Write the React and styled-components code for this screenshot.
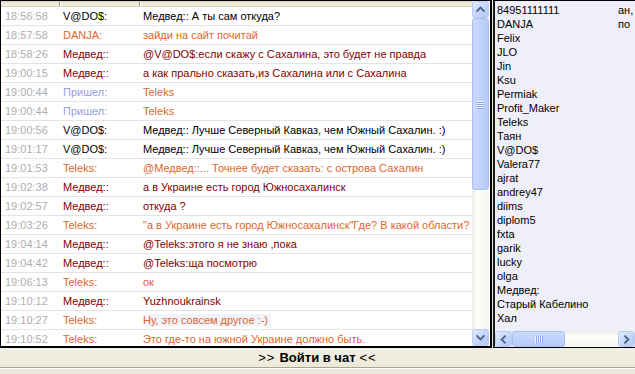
import React from 'react';
import styled, { createGlobalStyle } from 'styled-components';

const Global = createGlobalStyle`
  html, body { margin: 0; padding: 0; background: #ECE9D8; }
  body { font-family: "Liberation Sans", Arial, sans-serif; font-size: 11px; }
  #root { width: 635px; height: 374px; }
`;

const COLORS = {
  black: '#000000',
  orange: '#E0662A',
  maroon: '#840000',
  join: '#9C9CE2',
};

const messages = [
  ['18:56:58', 'V@DO$:', 'Медвед:: А ты сам откуда?', 'black', 'black'],
  ['18:57:58', 'DANJA:', 'зайди на сайт почитай', 'orange', 'orange'],
  ['18:58:26', 'Медвед::', '@V@DO$:если скажу с Сахалина, это будет не правда', 'maroon', 'maroon'],
  ['19:00:15', 'Медвед::', 'а как прально сказать,из Сахалина или с Сахалина', 'maroon', 'maroon'],
  ['19:00:44', 'Пришел:', 'Teleks', 'join', 'orange'],
  ['19:00:44', 'Пришел:', 'Teleks', 'join', 'orange'],
  ['19:00:56', 'V@DO$:', 'Медвед:: Лучше Северный Кавказ, чем Южный Сахалин. :)', 'black', 'black'],
  ['19:01:17', 'V@DO$:', 'Медвед:: Лучше Северный Кавказ, чем Южный Сахалин. :)', 'black', 'black'],
  ['19:01:53', 'Teleks:', '@Медвед::... Точнее будет сказать: с острова Сахалин', 'orange', 'orange'],
  ['19:02:38', 'Медвед::', 'а в Украине есть город Южносахалинск', 'maroon', 'maroon'],
  ['19:02:57', 'Медвед::', 'откуда ?', 'maroon', 'maroon'],
  ['19:03:26', 'Teleks:', '"а в Украине есть город Южносахалинск"Где? В какой области?', 'orange', 'orange'],
  ['19:04:14', 'Медвед::', '@Teleks:этого я не знаю ,пока', 'maroon', 'maroon'],
  ['19:04:42', 'Медвед::', '@Teleks:ща посмотрю', 'maroon', 'maroon'],
  ['19:06:13', 'Teleks:', 'ок', 'orange', 'orange'],
  ['19:10:12', 'Медвед::', 'Yuzhnoukrainsk', 'maroon', 'maroon'],
  ['19:10:27', 'Teleks:', 'Ну, это совсем другое :-)', 'orange', 'orange', true],
  ['19:10:52', 'Teleks:', 'Это где-то на южной Украине должно быть.', 'orange', 'orange'],
];

const users = [
  ['84951111111', 'ан,'],
  ['DANJA', 'по'],
  ['Felix'], ['JLO'], ['Jin'], ['Ksu'], ['Permiak'], ['Profit_Maker'], ['Teleks'],
  ['Таян'], ['V@DO$'], ['Valera77'], ['ajrat'], ['andrey47'], ['diims'], ['diplom5'],
  ['fxta'], ['garik'], ['lucky'], ['olga'], ['Медвед:'], ['Старый Кабелино'], ['Хал'],
];

const Screen = styled.div`
  width: 635px;
  height: 374px;
  display: flex;
  flex-direction: column;
  background: #ECE9D8;
  overflow: hidden;
`;

const TopArea = styled.div`
  display: flex;
  height: 348px;
  gap: 1px;
`;

const ChatPanel = styled.div`
  width: 492px;
  flex: none;
  box-sizing: border-box;
  border: 1px solid #000;
  border-right-width: 2px;
  border-bottom-width: 2px;
  background: #fff;
  display: flex;
  padding-right: 1px;
  overflow: hidden;
`;

const ChatList = styled.div`
  width: 471px;
  flex: none;
  display: flex;
  flex-direction: column;
  overflow: hidden;
`;

const cols = '59px 80px 1fr';

const Header = styled.div`
  display: grid;
  grid-template-columns: ${cols};
  height: 6px;
  flex: none;
  box-sizing: border-box;
  background: linear-gradient(#D8D4C2, #EBE8D6 40%, #F2F0E4);
  border-bottom: 1px solid #D2CFBD;
`;

const HeaderCell = styled.div`
  border-right: ${(p) => (p.$last ? 'none' : '1px solid #9E9A88')};
  box-shadow: ${(p) => (p.$last ? 'none' : '1px 0 0 #fff')};
`;

const Row = styled.div`
  display: grid;
  grid-template-columns: ${cols};
  height: 19px;
  flex: none;
  box-sizing: border-box;
  border-bottom: 1px solid #E4E4E4;
  line-height: 18px;
  white-space: nowrap;
`;

const TimeCell = styled.div`
  padding-left: 4px;
  color: #AEAEAE;
  overflow: hidden;
`;

const NickCell = styled.div`
  padding-left: 3px;
  color: ${(p) => COLORS[p.$tone]};
  overflow: hidden;
`;

const MsgCell = styled.div`
  padding-left: 3px;
  color: ${(p) => COLORS[p.$tone]};
  overflow: hidden;
`;

const MsgText = styled.span`
  background: ${(p) => (p.$hl ? '#F0F3FC' : 'transparent')};
  padding-right: ${(p) => (p.$hl ? '3px' : '0')};
`;

const VScroll = styled.div`
  width: 17px;
  flex: none;
  display: flex;
  flex-direction: column;
  background: linear-gradient(90deg, #EEEDE5, #FDFDFA 30%, #F6F6F1);
`;

const ScrollButton = styled.div`
  width: ${(p) => (p.$w ? `${p.$w}px` : '17px')};
  height: ${(p) => (p.$h ? `${p.$h}px` : '17px')};
  flex: none;
  box-sizing: border-box;
  border: 1px solid #B9CCF6;
  border-radius: 3px;
  background: linear-gradient(135deg, #E4ECFD, #C4D5FB 55%, #B2C7F5);
  display: flex;
  align-items: center;
  justify-content: center;
`;

const VThumb = styled.div`
  height: ${(p) => p.$size}px;
  flex: none;
  box-sizing: border-box;
  border: 1px solid #A9BFF0;
  border-radius: 3px;
  background: linear-gradient(90deg, #CAD9FC, #C1D3FC 50%, #B6CAF7);
  display: flex;
  align-items: center;
  justify-content: center;
`;

const HThumb = styled(VThumb)`
  height: auto;
  width: ${(p) => p.$size}px;
  background: linear-gradient(#CAD9FC, #C1D3FC 50%, #B6CAF7);
`;

const Track = styled.div`
  flex: 1;
`;

const Grip = styled.div`
  display: flex;
  flex-direction: ${(p) => (p.$h ? 'row' : 'column')};
  gap: 1px;
  & > i {
    display: block;
    width: ${(p) => (p.$h ? '1px' : '7px')};
    height: ${(p) => (p.$h ? '7px' : '1px')};
    background: #EEF3FE;
    box-shadow: ${(p) => (p.$h ? '1px 0 0 #8EA8E6' : '0 1px 0 #8EA8E6')};
  }
`;

const UserPanel = styled.div`
  flex: 1;
  box-sizing: border-box;
  border-top: 1px solid #000;
  border-left: 2px solid #1A1A1A;
  border-bottom: 1px solid #000;
  background: #EFEFFA;
  display: flex;
  flex-direction: column;
  overflow: hidden;
`;

const UserList = styled.div`
  flex: 1;
  padding-top: 2px;
  overflow: hidden;
`;

const UserRow = styled.div`
  display: grid;
  grid-template-columns: 123px 1fr;
  height: 14px;
  line-height: 14px;
  white-space: nowrap;
  color: #000;
`;

const UserName = styled.div`
  padding-left: 2px;
  overflow: hidden;
`;

const UserExtra = styled.div`
  overflow: hidden;
`;

const HScroll = styled.div`
  height: 16px;
  flex: none;
  display: flex;
  background: linear-gradient(#EEEDE5, #FDFDFA 30%, #F6F6F1);
`;

const EnterBar = styled.div`
  height: 19px;
  flex: none;
  display: flex;
  align-items: center;
  justify-content: center;
  gap: 4px;
  font-size: 13px;
  color: #000;
  background: linear-gradient(#F1EFE4, #ECE9D8);
  border-bottom: 1px solid #A9A592;
  box-shadow: 0 1px 0 #fff;
  cursor: pointer;
`;

const Arrows = styled.span`
  font-weight: normal;
  letter-spacing: 1px;
`;

const EnterLabel = styled.span`
  font-weight: bold;
`;

const Footer = styled.div`
  flex: 1;
  margin-top: 1px;
  background: #ECE9D8;
`;

const Chevron = ({ dir }) => {
  const paths = {
    up: 'M4.5 9.5 L8 6 L11.5 9.5',
    down: 'M4.5 6.5 L8 10 L11.5 6.5',
    left: 'M9.5 4.5 L6 8 L9.5 11.5',
    right: 'M6.5 4.5 L10 8 L6.5 11.5',
  };
  return (
    <svg width="15" height="15" viewBox="0 0 16 16">
      <path d={paths[dir]} fill="none" stroke="#4D6185" strokeWidth="2" strokeLinecap="square" />
    </svg>
  );
};

export default function App() {
  return (
    <>
      <Global />
      <Screen>
        <TopArea>
          <ChatPanel>
            <ChatList>
              <Header>
                <HeaderCell />
                <HeaderCell />
                <HeaderCell $last />
              </Header>
              {messages.map(([time, nick, msg, nickTone, msgTone, hl], i) => (
                <Row key={i}>
                  <TimeCell>{time}</TimeCell>
                  <NickCell $tone={nickTone}>{nick}</NickCell>
                  <MsgCell $tone={msgTone}>
                    <MsgText $hl={hl}>{msg}</MsgText>
                  </MsgCell>
                </Row>
              ))}
            </ChatList>
            <VScroll>
              <ScrollButton>
                <Chevron dir="up" />
              </ScrollButton>
              <VThumb $size={172}>
                <Grip>
                  <i /><i /><i /><i />
                </Grip>
              </VThumb>
              <Track />
              <ScrollButton>
                <Chevron dir="down" />
              </ScrollButton>
            </VScroll>
          </ChatPanel>
          <UserPanel>
            <UserList>
              {users.map(([name, extra], i) => (
                <UserRow key={i}>
                  <UserName>{name}</UserName>
                  <UserExtra>{extra || ''}</UserExtra>
                </UserRow>
              ))}
            </UserList>
            <HScroll>
              <ScrollButton $h={16}>
                <Chevron dir="left" />
              </ScrollButton>
              <HThumb $size={53}>
                <Grip $h>
                  <i /><i /><i /><i />
                </Grip>
              </HThumb>
              <Track />
              <ScrollButton $h={16}>
                <Chevron dir="right" />
              </ScrollButton>
            </HScroll>
          </UserPanel>
        </TopArea>
        <EnterBar>
          <Arrows>&gt;&gt;</Arrows>
          <EnterLabel>Войти в чат</EnterLabel>
          <Arrows>&lt;&lt;</Arrows>
        </EnterBar>
        <Footer />
      </Screen>
    </>
  );
}
